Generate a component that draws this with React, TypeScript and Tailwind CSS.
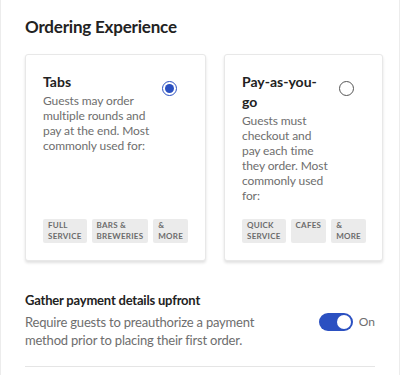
import React from "react";

const font = { fontFamily: "Lato, 'Noto Sans', sans-serif" };

function Radio({ on }: { on: boolean }) {
  return on ? (
    <span className="mt-[9px] flex h-[15px] w-[15px] shrink-0 items-center justify-center rounded-full border-[1.5px] border-[#2b50c1]">
      <span className="h-[9px] w-[9px] rounded-full bg-[#2b50c1]" />
    </span>
  ) : (
    <span className="mt-[9px] block h-[15px] w-[15px] shrink-0 rounded-full border-[1.5px] border-[#555]" />
  );
}

function Tag({ label }: { label: string }) {
  return (
    <span className="w-min rounded-[2px] bg-[#ebebeb] px-[5px] py-[1px] text-[8px] font-bold uppercase leading-[11px] tracking-[0.25px] text-[#6b6b6b]">
      {label}
    </span>
  );
}

function OptionCard({
  title,
  text,
  tags,
  selected,
  width,
}: {
  title: string;
  text: string;
  tags: string[];
  selected: boolean;
  width: string;
}) {
  return (
    <div
      className={`${width} flex shrink-0 flex-col rounded-[3px] border border-[#e8e8e8] bg-white pb-[17px] pl-[17px] pt-[17px] shadow-[0_2px_3px_rgba(0,0,0,0.12)]`}
    >
      <div className="flex">
        <div className="min-w-0 flex-1">
          <div className="text-[14px] font-bold leading-[20px] text-[#222]">{title}</div>
          <p className="mt-[1px] text-[12px] leading-[15px] tracking-[-0.1px] text-[#6e6e6e]">{text}</p>
        </div>
        <div className="ml-[8px] mr-[28px] shrink-0">
          <Radio on={selected} />
        </div>
      </div>
      <div className="mt-auto flex gap-[5px] pt-4">
        {tags.map((t) => (
          <Tag key={t} label={t} />
        ))}
      </div>
    </div>
  );
}

export default function App() {
  return (
    <div className="min-h-[375px] overflow-hidden border-x border-[#ececec] bg-white px-6 pt-[15px]" style={font}>
      <h1 className="text-[17px] font-bold leading-[24px] tracking-[-0.2px] text-[#222]">Ordering Experience</h1>

      <div className="mt-[15px] flex gap-[18px]">
        <OptionCard
          width="w-[181px]"
          title="Tabs"
          text="Guests may order multiple rounds and pay at the end. Most commonly used for:"
          tags={["Full service", "Bars & breweries", "& more"]}
          selected
        />
        <OptionCard
          width="w-[159px]"
          title="Pay-as-you-go"
          text="Guests must checkout and pay each time they order. Most commonly used for:"
          tags={["Quick service", "Cafes", "& more"]}
          selected={false}
        />
      </div>

      <div className="mt-[29px]">
        <div className="text-[13px] font-bold leading-[20px] tracking-[-0.2px] text-[#222]">
          Gather payment details upfront
        </div>
        <div className="mt-[3px] flex items-start justify-between">
          <p className="max-w-[250px] text-[13px] leading-[18px] tracking-[-0.2px] text-[#6e6e6e]">
            Require guests to preauthorize a payment method prior to placing their first order.
          </p>
          <div className="flex items-center gap-[6px]">
            <span className="flex h-[18px] w-[34px] items-center justify-end rounded-full bg-[#2b50c1] pr-[2px]">
              <span className="h-[14px] w-[14px] rounded-full bg-white" />
            </span>
            <span className="text-[12px] text-[#6e6e6e]">On</span>
          </div>
        </div>
        <div className="mt-[17px] h-px bg-[#e5e5e5]" />
      </div>
    </div>
  );
}
